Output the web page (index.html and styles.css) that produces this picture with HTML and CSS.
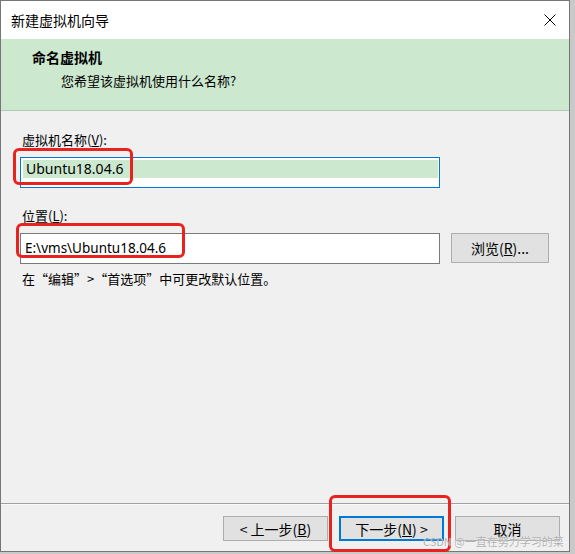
FILE: index.html
```html
<!DOCTYPE html>
<html lang="zh-CN">
<head>
  <meta charset="UTF-8" />
  <title>新建虚拟机向导</title>
  <link rel="stylesheet" href="styles.css">
</head>
<body>
  <div class="window">
    <div class="titlebar">
      <span>新建虚拟机向导</span>
      <svg class="close" width="12" height="12" viewBox="0 0 12 12">
        <path d="M0.5 0.5 L11.5 11.5 M11.5 0.5 L0.5 11.5" stroke="#000" stroke-width="1" fill="none" />
      </svg>
    </div>

    <div class="header">
      <h1>命名虚拟机</h1>
      <p>您希望该虚拟机使用什么名称?</p>
    </div>

    <div class="main">
      <label class="label">虚拟机名称(<u>V</u>):</label>
      <div class="name-field">
        <span class="sel">Ubuntu18.04.6</span>
      </div>

      <label class="label label-gap">位置(<u>L</u>):</label>
      <div class="row">
        <div class="path-field">E:\vms\Ubuntu18.04.6</div>
        <button class="btn browse">浏览(<u>R</u>)...</button>
      </div>

      <div class="hint">在“编辑”&gt;“首选项”中可更改默认位置。</div>
    </div>

    <div class="footer">
      <button class="btn">&lt; 上一步(<u>B</u>)</button>
      <button class="btn btn-focus">下一步(<u>N</u>) &gt;</button>
      <button class="btn">取消</button>
    </div>

    <div class="mark mark-name"></div>
    <div class="mark mark-path"></div>
    <div class="mark mark-next"></div>
    <div class="watermark">CSDN @一直在努力学习的菜鸟</div>
  </div>
</body>
</html>
```

FILE: styles.css
```css
* { box-sizing: border-box; }

body {
  margin: 0;
  background: #c9c9c9;
  font-family: "Noto Sans CJK SC", sans-serif;
  font-size: 13px;
  color: #000;
}

.window {
  position: relative;
  width: 570px;
  height: 552px;
  border: 1px solid #767676;
  background: #f0f0f0;
  display: flex;
  flex-direction: column;
}

.titlebar {
  height: 38px;
  flex: none;
  background: #fff;
  display: flex;
  align-items: center;
  justify-content: space-between;
  padding: 0 13px 0 10px;
  font-size: 14px;
}

.header {
  height: 72px;
  flex: none;
  background: #cce8cf;
  border-bottom: 1px solid #b4c8b6;
  padding: 8px 0 0 31px;
}

.header h1 {
  margin: 0;
  font-size: 14px;
  font-weight: bold;
  line-height: 20px;
}

.header p {
  margin: 4px 0 0 29px;
  line-height: 20px;
}

.main {
  flex: 1;
  padding: 20px 10px 0 19px;
}

.label {
  display: block;
  line-height: 18px;
  padding-left: 2px;
}

.label-gap { margin-top: 19px; }

.name-field {
  margin-top: 8px;
  width: 420px;
  height: 31px;
  border: 1px solid #0078d7;
  background: #fff;
  padding: 2px 1px 0 2px;
}

.sel {
  display: block;
  height: 18px;
  line-height: 18px;
  padding-left: 3px;
  background: #cce8cf;
  font-family: "Noto Sans", sans-serif;
  font-size: 14px;
}

.row {
  display: flex;
  align-items: flex-start;
  gap: 11px;
  margin-top: 8px;
}

.path-field {
  width: 420px;
  height: 31px;
  border: 1px solid #7a7a7a;
  background: #fff;
  padding-left: 4px;
  line-height: 29px;
  font-family: "Noto Sans", sans-serif;
  font-size: 13.5px;
}

.hint {
  margin-top: 6px;
  line-height: 18px;
  padding-left: 2px;
}

.btn {
  width: 105px;
  height: 25px;
  padding: 0;
  border: 1px solid #adadad;
  background: #e1e1e1;
  font-family: "Noto Sans CJK SC", sans-serif;
  font-size: 14px;
  color: #000;
}

.browse {
  width: 98px;
  height: 30px;
}

.btn-focus {
  border-color: #0078d7;
  box-shadow: inset 0 0 0 1px #0078d7;
}

.footer {
  height: 48px;
  flex: none;
  border-top: 1px solid #a0a0a0;
  box-shadow: inset 0 1px 0 #fafafa;
  display: flex;
  justify-content: flex-end;
  gap: 11px;
  padding: 12px 9px 0 0;
}

.mark {
  position: absolute;
  border: 3px solid #e8231f;
  border-radius: 6px;
}

.mark-name { left: 12px; top: 147px; width: 120px; height: 37px; }
.mark-path { left: 15px; top: 222px; width: 169px; height: 35px; }
.mark-next { left: 328px; top: 494px; width: 122px; height: 57px; }

.watermark {
  position: absolute;
  left: 422px;
  top: 532px;
  font-size: 11px;
  line-height: 16px;
  color: rgba(150, 150, 150, 0.75);
  text-shadow: 0 0 1px #fff;
}
```
